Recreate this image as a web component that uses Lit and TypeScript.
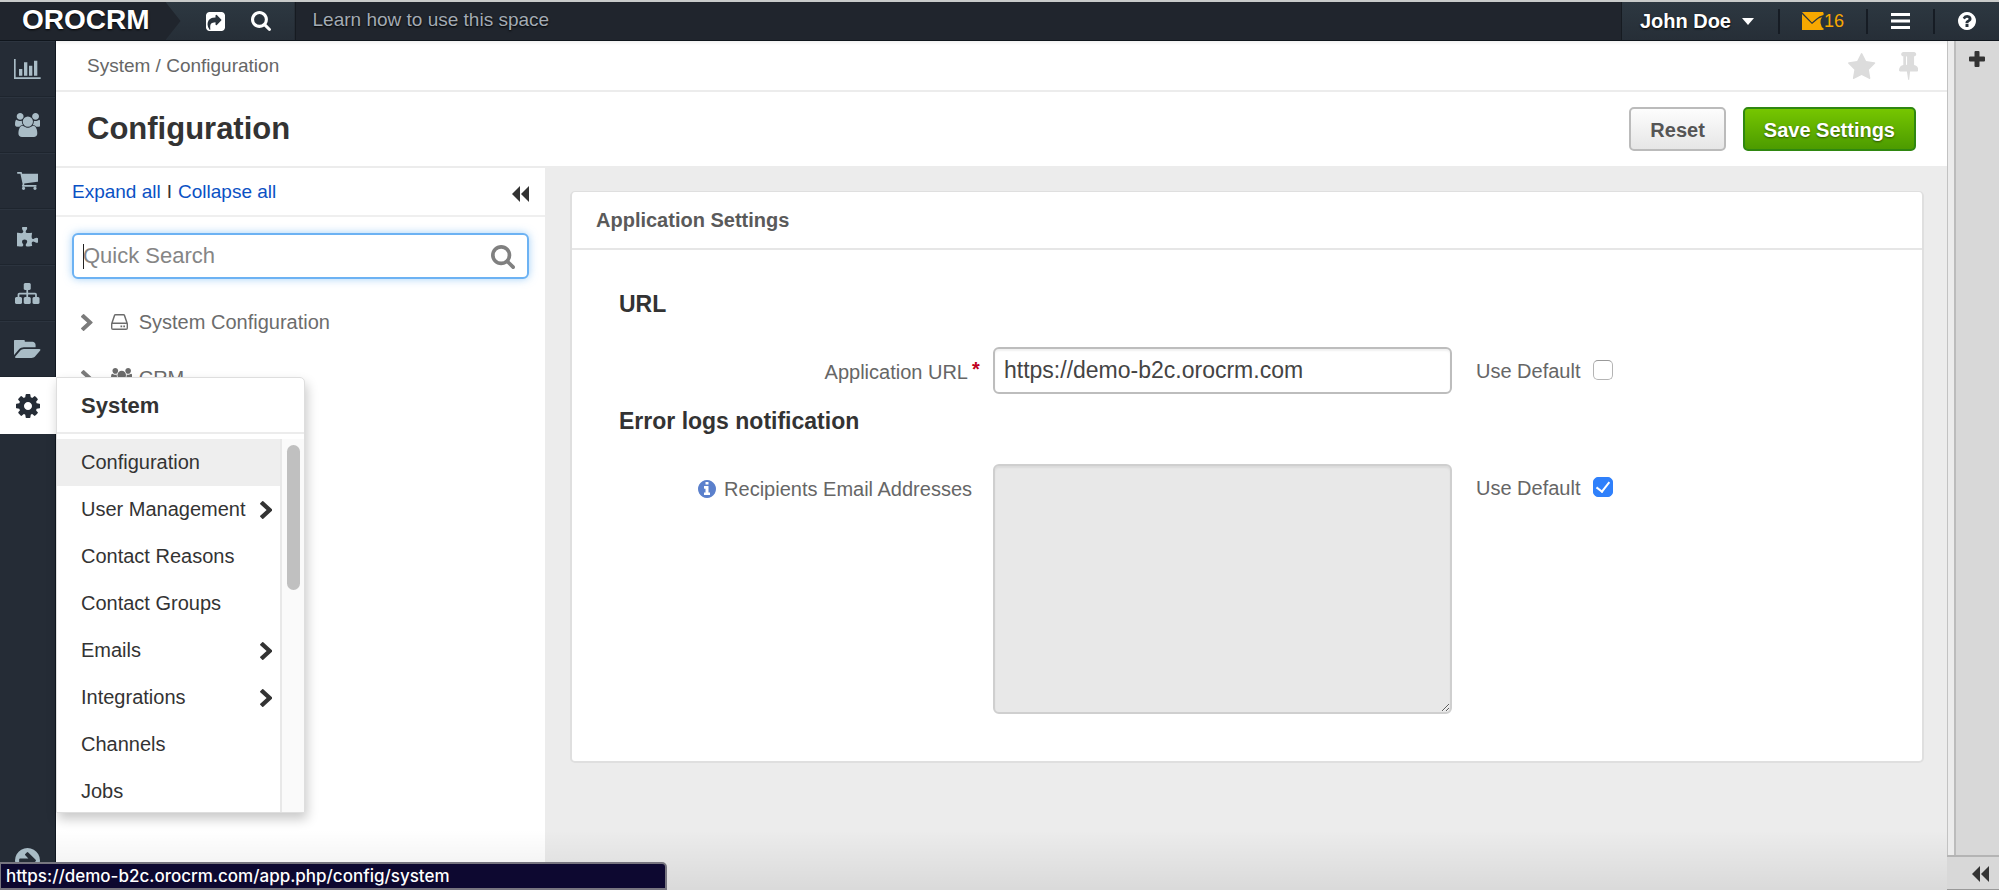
import { LitElement, html, css, svg, nothing } from "lit";
import { customElement, property } from "lit/decorators.js";

type Glyph = { box: string; paths: string[] };

const DISC =
  "M1664 896q0 209-103 385.5t-279.5 279.5-385.5 103-385.5-103-279.5-279.5-103-385.5 103-385.5 279.5-279.5 385.5-103 385.5 103 279.5 279.5 103 385.5z";

const GLYPHS: Record<string, Glyph> = {
  chart: {
    box: "0 128 2048 1536",
    paths: [
      "M640 896v512h-256v-512h256zm384-512v1024h-256v-1024h256zm1024 1152v128h-2048v-1536h128v1408h1920zm-640-896v768h-256v-768h256zm384-384v1152h-256v-1152h256z",
    ],
  },
  users: {
    box: "0 0 1920 1792",
    paths: [
      "M593 896q-162 5-265 128h-134q-82 0-138-40.5t-56-118.5q0-353 124-353 6 0 43.5 21t97.5 42.5 119 21.5q67 0 133-23-5 37-5 66 0 139 81 256zm1071 637q0 120-73 189.5t-194 69.5h-874q-121 0-194-69.5t-73-189.5q0-53 3.5-103.5t14-109 26.5-108.5 43-97.5 62-81 85.5-53.5 111.5-20q10 0 43 21.5t73 48 107 48 135 21.5 135-21.5 107-48 73-48 43-21.5q61 0 111.5 20t85.5 53.5 62 81 43 97.5 26.5 108.5 14 109 3.5 103.5zm-1024-1277q0 106-75 181t-181 75-181-75-75-181 75-181 181-75 181 75 75 181zm704 384q0 159-112.5 271.5t-271.5 112.5-271.5-112.5-112.5-271.5 112.5-271.5 271.5-112.5 271.5 112.5 112.5 271.5zm576 225q0 78-56 118.5t-138 40.5h-134q-103-123-265-128 81-117 81-256 0-29-5-66 66 23 133 23 59 0 119-21.5t97.5-42.5 43.5-21q124 0 124 353zm-128-609q0 106-75 181t-181 75-181-75-75-181 75-181 181-75 181 75 75 181z",
    ],
  },
  cart: {
    box: "64 256 1664 1408",
    paths: [
      "M704 1536q0 52-38 90t-90 38-90-38-38-90 38-90 90-38 90 38 38 90zm896 0q0 52-38 90t-90 38-90-38-38-90 38-90 90-38 90 38 38 90zm128-1088v512q0 24-16.5 42.5t-40.5 21.5l-1044 122q13 60 13 70 0 16-24 64h920q26 0 45 19t19 45-19 45-45 19h-1024q-26 0-45-19t-19-45q0-11 8-31.5t16-36 21.5-40 15.5-29.5l-177-823h-204q-26 0-45-19t-19-45 19-45 45-19h256q16 0 28.5 6.5t19.5 15.5 13 24.5 8 26 5.5 29.5 4.5 26h1201q26 0 45 19t19 45z",
    ],
  },
  puzzle: {
    box: "91 64 1664 1600",
    paths: [
      "M1755 1083q0 81-44.5 135t-123.5 54q-41 0-77.5-17.5t-59-38-56.5-38-71-17.5q-110 0-110 124 0 39 16 115t15 115v5q-22 0-33 1-34 3-97.5 11.5t-115.5 13.5-98 5q-61 0-103-26.5t-42-83.5q0-37 17.5-71t38-56.5 38-59 17.5-77.5q0-79-54-123.5t-135-44.5q-84 0-143 45.5t-59 127.5q0 43 15 83t33.5 64.5 33.5 53 15 50.5q0 45-46 89-37 35-117 35-95 0-245-24-9-2-27.5-4t-27.5-4l-13-2q-1 0-3-1-2 0-2-1v-1024q2 1 17.5 3.5t34 5 21.5 3.5q150 24 245 24 80 0 117-35 46-44 46-89 0-22-15-50.5t-33.5-53-33.5-64.5-15-83q0-82 59-127.5t144-45.5q80 0 134 44.5t54 123.5q0 41-17.5 77.5t-38 59-38 56.5-17.5 71q0 57 42 83.5t103 26.5q64 0 180-15t163-17v2q-1 2-3.5 17.5t-5 34-3.5 21.5q-24 150-24 245 0 80 35 117 44 46 89 46 22 0 50.5-15t53-33.5 64.5-33.5 83-15q82 0 127.5 59t45.5 143z",
    ],
  },
  sitemap: {
    box: "0 128 1792 1536",
    paths: [
      "M1792 1248v320q0 40-28 68t-68 28h-320q-40 0-68-28t-28-68v-320q0-40 28-68t68-28h96v-192h-512v192h96q40 0 68 28t28 68v320q0 40-28 68t-68 28h-320q-40 0-68-28t-28-68v-320q0-40 28-68t68-28h96v-192h-512v192h96q40 0 68 28t28 68v320q0 40-28 68t-68 28h-320q-40 0-68-28t-28-68v-320q0-40 28-68t68-28h96v-192q0-52 38-90t90-38h512v-192h-96q-40 0-68-28t-28-68v-320q0-40 28-68t68-28h320q40 0 68 28t28 68v320q0 40-28 68t-68 28h-96v192h512q52 0 90 38t38 90v192h96q40 0 68 28t28 68z",
    ],
  },
  folder: {
    box: "0 256 1879 1280",
    paths: [
      "M1879 952q0 31-31 66l-336 396q-43 51-120.5 86.5t-143.5 35.5h-1088q-34 0-60.5-13t-26.5-43q0-31 31-66l336-396q43-51 120.5-86.5t143.5-35.5h1088q34 0 60.5 13t26.5 43zm-343-344v160h-832q-94 0-197 47.5t-164 119.5l-337 396-5 6q0-4-.5-12.5t-.5-12.5v-960q0-92 66-158t158-66h320q92 0 158 66t66 158v32h544q92 0 158 66t66 158z",
    ],
  },
  cog: {
    box: "128 128 1536 1536",
    paths: [
      "M1152 896q0-106-75-181t-181-75-181 75-75 181 75 181 181 75 181-75 75-181zm512-109v222q0 12-8 23t-20 13l-185 28q-19 54-39 91 35 50 107 138 10 12 10 25t-9 23q-27 37-99 108t-94 71q-12 0-26-9l-138-108q-44 23-91 38-16 136-29 186-7 28-36 28h-222q-14 0-24.5-8.5t-11.5-21.5l-28-184q-49-16-90-37l-141 107q-10 9-25 9-14 0-25-11-126-114-165-168-7-10-7-23 0-12 8-23 15-21 51-66.5t54-70.5q-27-50-41-99l-183-27q-13-2-21-12.5t-8-23.5v-222q0-12 8-23t19-13l186-28q14-46 39-92-40-57-107-138-10-12-10-24 0-10 9-23 26-36 98.5-107.5t94.5-71.5q13 0 26 10l138 107q44-23 91-38 16-136 29-186 7-28 36-28h222q14 0 24.5 8.5t11.5 21.5l28 184q49 16 90 37l142-107q9-9 24-9 13 0 25 10 129 119 165 170 7 8 7 22 0 12-8 23-15 21-51 66.5t-54 70.5q26 50 41 98l183 28q13 2 21 12.5t8 23.5z",
    ],
  },
  search: {
    box: "64 128 1664 1664",
    paths: [
      "M1216 832q0-185-131.5-316.5t-316.5-131.5-316.5 131.5-131.5 316.5 131.5 316.5 316.5 131.5 316.5-131.5 131.5-316.5zm512 832q0 52-38 90t-90 38q-54 0-90-38l-343-342q-179 124-399 124-143 0-273.5-55.5t-225-150-150-225-55.5-273.5 55.5-273.5 150-225 225-150 273.5-55.5 273.5 55.5 225 150 150 225 55.5 273.5q0 220-124 399l343 343q37 37 37 90z",
    ],
  },
  share: {
    box: "128 128 1536 1536",
    paths: [
      "M1005 1171l352-352q19-19 19-45t-19-45l-352-352q-30-31-70-14-39 17-39 59v160q-119 0-216 19.5t-162.5 51-114 79-76.5 95.5-44.5 109-21.5 111.5-5 110.5q0 181 167 404 11 12 25 12 7 0 13-3 22-9 19-33-44-354 62-473 46-52 130-75.5t224-23.5v160q0 42 39 59 12 5 25 5 26 0 45-19zM416 128h960q119 0 203.500 84.500t84.500 203.500v960q0 119-84.500 203.500t-203.500 84.500h-960q-119 0-203.500-84.500t-84.500-203.500v-960q0-119 84.500-203.500t203.500-84.500z",
    ],
  },
  star: {
    box: "64 32 1664 1588",
    paths: [
      "M1728 647q0 22-26 48l-363 354 86 500q1 7 1 20 0 21-10.5 35.5t-30.5 14.5q-19 0-40-12l-449-236-449 236q-22 12-40 12-21 0-31.5-14.5t-10.5-35.5q0-6 2-20l86-500-364-354q-25-27-25-48 0-37 56-46l502-73 225-455q19-41 49-41t49 41l225 455 502 73q56 9 56 46z",
    ],
  },
  pin: {
    box: "320 128 1152 1664",
    paths: [
      "M800 864v-448q0-14-9-23t-23-9-23 9-9 23v448q0 14 9 23t23 9 23-9 9-23zm672 352q0 26-19 45t-45 19h-429l-51 483q-2 12-10.5 20.5t-20.500 8.500h-1q-27 0-32-27l-76-485h-404q-26 0-45-19t-19-45q0-123 78.5-221.5t177.5-98.5v-512q-52 0-90-38t-38-90 38-90 90-38h640q52 0 90 38t38 90-38 90-90 38v512q99 0 177.5 98.5t78.5 221.5z",
    ],
  },
  help: {
    box: "128 128 1536 1536",
    paths: [
      "M1024 1376v-192q0-14-9-23t-23-9h-192q-14 0-23 9t-9 23v192q0 14 9 23t23 9h192q14 0 23-9t9-23zm256-672q0-88-55.5-163t-138.500-116-170-41q-243 0-371 213-15 24 8 42l132 100q7 6 19 6 16 0 25-12 53-68 86-92 34-24 86-24 48 0 85.5 26t37.5 59q0 38-20 61t-68 45q-63 28-115.5 86.5t-52.5 125.5v36q0 14 9 23t23 9h192q14 0 23-9t9-23q0-19 21.5-49.5t54.5-49.5q32-18 49-28.5t46-35 44.5-48 28-60.5 12.5-81z" +
        DISC,
    ],
  },
  info: {
    box: "128 128 1536 1536",
    paths: [
      "M1152 1376v-160q0-14-9-23t-23-9h-96v-512q0-14-9-23t-23-9h-320q-14 0-23 9t-9 23v160q0 14 9 23t23 9h96v320h-96q-14 0-23 9t-9 23v160q0 14 9 23t23 9h448q14 0 23-9t9-23zm-128-896v-160q0-14-9-23t-23-9h-192q-14 0-23 9t-9 23v160q0 14 9 23t23 9h192q14 0 23-9t9-23z" +
        DISC,
    ],
  },
  arrowDisc: {
    box: "128 128 1536 1536",
    paths: [
      "M1413 896q0-27-18-45l-91-91-362-362q-18-18-45-18t-45 18l-91 91q-18 18-18 45t18 45l189 189h-502q-26 0-45 19t-19 45v128q0 26 19 45t45 19h502l-189 189q-19 19-19 45t19 45l91 91q18 18 45 18t45-18l362-362 91-91q18-18 18-45z" +
        DISC,
    ],
  },
  chevron: {
    box: "346 135 1036 1503",
    paths: [
      "M1363 932l-742 687q-19 19-45 19t-45-19l-166-166q-19-19-19-45t19-45l531-476-531-476q-19-19-19-45t19-45l166-166q19-19 45-19t45 19l742 687q19 19 19 45t-19 45z",
    ],
  },
  rewind: { box: "0 0 17 16", paths: ["M8 0V16L0 8ZM17 0V16L9 8Z"] },
  plus: {
    box: "0 0 16 16",
    paths: ["M6.500 0h3q1 0 1 1v4.500H15q1 0 1 1v3q0 1-1 1h-4.500V15q0 1-1 1h-3q-1 0-1-1v-4.500H1q-1 0-1-1v-3q0-1 1-1h4.500V1q0-1 1-1z"],
  },
  caret: { box: "0 0 12 7", paths: ["M0 0H12L6 7Z"] },
  bars: { box: "0 0 19 16", paths: ["M0 0h19v3H0ZM0 6.500h19v3H0ZM0 13h19v3H0Z"] },
  envelope: {
    box: "0 0 22 18",
    paths: ["M0 2L10 12L13 9.500Q16 6 20 5Q18 8 18.500 11Q19 15 22 17Q21.500 18 20 18H0Z", "M0 0H21Q22 1 21.500 3Q17 4 14 7L10 10.500Z"],
  },
  drive: {
    box: "0 0 17 16",
    paths: [
      "M4.500 0h8q1.300 0 1.700 1.200L16.800 9q.2.500.2 1v4q0 2-2 2h-13q-2 0-2-2v-4q0-.500.2-1L2.800 1.200Q3.200 0 4.500 0ZM4.300 1.400L1.900 8.500h13.200L12.700 1.400ZM1.400 10v4.500h14.200V10ZM9.500 11.500h1.700v1.700H9.500ZM12.300 11.500h1.700v1.700h-1.700Z",
    ],
  },
};

function icon(name: string, cls: string) {
  const g = GLYPHS[name];
  return html`<svg class="icon ${cls}" viewBox=${g.box} fill="currentColor" fill-rule="evenodd" aria-hidden="true">
    ${g.paths.map((d) => svg`<path d=${d}></path>`)}
  </svg>`;
}

const shared = css`
  * {
    box-sizing: border-box;
  }
  .icon {
    display: block;
    flex: none;
    height: 20px;
    width: auto;
  }
  button,
  input,
  textarea {
    font-family: inherit;
    margin: 0;
  }
  .bare {
    display: flex;
    align-items: center;
    justify-content: center;
    padding: 0;
    border: 0;
    background: none;
    color: inherit;
    font-size: 20px;
    cursor: pointer;
  }
  a {
    text-decoration: none;
    color: inherit;
  }
`;

@customElement("oro-header")
export class OroHeader extends LitElement {
  static styles = [
    shared,
    css`
      :host {
        display: flex;
        height: 41px;
        flex: none;
        border-top: 2px solid #c9cbca;
        border-bottom: 1px solid #0f151c;
        background: #20252d;
        color: #fff;
        text-shadow: 0 1px 2px #000;
      }
      .logo {
        padding: 0 16px 0 22px;
        font-size: 28px;
        line-height: 36px;
        font-weight: bold;
      }
      .tools {
        display: flex;
        align-items: center;
        gap: 26px;
        padding: 0 24px 0 40px;
        background: linear-gradient(#2d3841, #262e37);
        clip-path: polygon(0 0, 100% 0, 100% 100%, 0 100%, 15px 50%);
      }
      .share {
        height: 19px;
      }
      .find {
        height: 20px;
      }
      .hint {
        flex: 1;
        padding-left: 17px;
        border-left: 1px solid #161b21;
        font-size: 19px;
        line-height: 36px;
        color: #a3abb4;
      }
      .user {
        display: flex;
        align-items: center;
        background: linear-gradient(#2d3841, #262e37);
        border-left: 1px solid #161b21;
      }
      .cell {
        height: 25px;
        border-left: 2px solid #161c24;
      }
      .name {
        padding: 0 24px 0 18px;
        gap: 11px;
        font-weight: bold;
        text-shadow: 0 1px 2px #000;
      }
      .caret {
        height: 7px;
      }
      .mail {
        display: flex;
        align-items: center;
        width: 88px;
        padding-left: 22px;
        color: #f7a800;
        font-size: 18px;
        text-shadow: none;
      }
      .envelope {
        height: 18px;
      }
      .menu {
        width: 67px;
      }
      .bars {
        height: 16px;
      }
      .help {
        width: 66px;
      }
      .question {
        height: 18px;
      }
    `,
  ];

  render() {
    return html`
      <a class="logo" href="#">OROCRM</a>
      <div class="tools">
        <button class="bare" aria-label="Shortcuts">${icon("share", "share")}</button>
        <button class="bare" aria-label="Search">${icon("search", "find")}</button>
      </div>
      <a class="hint" href="#">Learn how to use this space</a>
      <div class="user">
        <button class="bare name">John Doe ${icon("caret", "caret")}</button>
        <a class="mail cell" href="#">${icon("envelope", "envelope")}16</a>
        <button class="bare menu cell" aria-label="Menu">${icon("bars", "bars")}</button>
        <button class="bare help cell" aria-label="Help">${icon("help", "question")}</button>
      </div>
    `;
  }
}

const NAV = [
  { label: "Dashboards", glyph: "chart" },
  { label: "Customers", glyph: "users" },
  { label: "Sales", glyph: "cart" },
  { label: "Activities", glyph: "puzzle" },
  { label: "Marketing", glyph: "sitemap" },
  { label: "Reports", glyph: "folder" },
];

const SYSTEM_MENU = [
  { label: "Configuration", active: true },
  { label: "User Management", more: true },
  { label: "Contact Reasons" },
  { label: "Contact Groups" },
  { label: "Emails", more: true },
  { label: "Integrations", more: true },
  { label: "Channels" },
  { label: "Jobs" },
] as { label: string; active?: boolean; more?: boolean }[];

@customElement("oro-sidebar")
export class OroSidebar extends LitElement {
  static styles = [
    shared,
    css`
      :host {
        display: flex;
        flex-direction: column;
        flex: none;
        width: 56px;
        background: #252c36;
        border-right: 1px solid #101720;
        color: #a9bcc6;
        z-index: 2;
      }
      .nav {
        display: flex;
        align-items: center;
        justify-content: center;
        height: 56px;
        border-bottom: 1px solid #1e252e;
        border-top: 1px solid #2c343f;
      }
      .current {
        position: relative;
        height: 57px;
      }
      .current .nav {
        height: 57px;
        width: 56px;
        background: #fff;
        border: 0;
        color: #252c36;
      }
      .cart {
        height: 18px;
      }
      .puzzle,
      .sitemap {
        height: 21px;
      }
      .folder {
        height: 18px;
      }
      .cog,
      .users {
        height: 24px;
      }
      .expand {
        margin-top: auto;
        padding-bottom: 17px;
      }
      .disc {
        height: 25px;
      }
      .popup {
        position: absolute;
        top: 0;
        left: 56px;
        width: 249px;
        background: #fff;
        color: #333;
        border: 1px solid #dedede;
        border-radius: 0 5px 0 0;
        box-shadow: 2px 6px 12px rgba(0, 0, 0, 0.22);
      }
      .title {
        margin: 0;
        padding: 2px 24px 0;
        font-size: 22px;
        line-height: 52px;
        border-bottom: 2px solid #ececec;
      }
      .scroller {
        display: flex;
        margin-top: 5px;
        height: 373px;
        overflow: hidden;
      }
      .list {
        flex: 1;
        margin: 0;
        padding: 0;
        list-style: none;
      }
      .entry {
        display: flex;
        align-items: center;
        justify-content: space-between;
        padding: 0 8px 0 24px;
        font-size: 20px;
        line-height: 47px;
      }
      .active {
        background: #eee;
      }
      .chevron {
        height: 18px;
      }
      .track {
        width: 24px;
        padding: 6px 4px 5px 5px;
        background: #fafafa;
        border-left: 2px solid #e8e8e8;
      }
      .thumb {
        width: 13px;
        height: 145px;
        border-radius: 7px;
        background: #c0c0c0;
      }
    `,
  ];

  render() {
    return html`
      ${NAV.map((n) => html`<a class="nav" href="#" aria-label=${n.label}>${icon(n.glyph, n.glyph)}</a>`)}
      <div class="current">
        <a class="nav" href="#" aria-label="System">${icon("cog", "cog")}</a>
        <div class="popup">
          <h2 class="title">System</h2>
          <div class="scroller">
            <ul class="list">
              ${SYSTEM_MENU.map(
                (m) => html`<li>
                  <a class="entry ${m.active ? "active" : ""}" href="#">${m.label}${m.more ? icon("chevron", "chevron") : nothing}</a>
                </li>`,
              )}
            </ul>
            <div class="track"><div class="thumb"></div></div>
          </div>
        </div>
      </div>
      <button class="bare expand" aria-label="Expand menu">${icon("arrowDisc", "disc")}</button>
    `;
  }
}

@customElement("oro-tree")
export class OroTree extends LitElement {
  static styles = [
    shared,
    css`
      :host {
        flex: none;
        width: 489px;
        background: #fff;
      }
      .actions {
        display: flex;
        align-items: center;
        height: 49px;
        padding: 0 16px;
        border-bottom: 2px solid #efefef;
        font-size: 19px;
      }
      .link {
        color: #0a51c4;
      }
      .bar {
        padding: 0 6px;
      }
      .collapse {
        margin-left: auto;
        padding-top: 5px;
      }
      .rewind {
        height: 16px;
      }
      .search {
        position: relative;
        margin: 16px 16px 0;
      }
      .box {
        display: block;
        width: 100%;
        height: 46px;
        padding: 0 50px 0 9px;
        border: 2px solid #6cb2f3;
        border-radius: 6px;
        box-shadow: 0 0 8px rgba(90, 170, 240, 0.55);
        font-size: 22px;
        color: #444;
        outline: none;
      }
      .box::placeholder {
        color: #858585;
      }
      .cursor {
        position: absolute;
        left: 11px;
        top: 11px;
        width: 1px;
        height: 25px;
        background: #222;
      }
      .submit {
        position: absolute;
        right: 14px;
        top: 12px;
        color: #808080;
      }
      .find {
        height: 24px;
      }
      .nodes {
        margin: 0;
        padding: 15px 0 0 25px;
        list-style: none;
        color: #6c6c6c;
      }
      .node {
        display: flex;
        align-items: center;
        font-size: 20px;
        line-height: 56px;
      }
      .chevron {
        height: 17px;
        color: #7b7b7b;
      }
      .kind {
        display: flex;
        width: 46px;
        padding-left: 18px;
      }
      .drive {
        height: 16px;
      }
      .users {
        height: 20px;
      }
    `,
  ];

  render() {
    return html`
      <div class="actions">
        <a class="link" href="#">Expand all</a><span class="bar">I</span><a class="link" href="#">Collapse all</a>
        <button class="bare collapse" aria-label="Collapse panel">${icon("rewind", "rewind")}</button>
      </div>
      <div class="search">
        <input class="box" type="text" placeholder="Quick Search" aria-label="Quick Search" />
        <span class="cursor"></span>
        <button class="bare submit" aria-label="Search">${icon("search", "find")}</button>
      </div>
      <ul class="nodes">
        <li class="node">
          ${icon("chevron", "chevron")}<span class="kind">${icon("drive", "drive")}</span><a href="#">System Configuration</a>
        </li>
        <li class="node">
          ${icon("chevron", "chevron")}<span class="kind">${icon("users", "users")}</span><a href="#">CRM</a>
        </li>
      </ul>
    `;
  }
}

@customElement("oro-settings")
export class OroSettings extends LitElement {
  static styles = [
    shared,
    css`
      :host {
        flex: 1;
        min-width: 0;
        padding: 23px 23px 24px 25px;
        background: #ececec;
      }
      .card {
        background: #fff;
        border: 2px solid #dfdfdf;
        border-top-width: 1px;
        border-radius: 5px;
      }
      .head {
        margin: 0;
        padding: 0 24px;
        font-size: 20px;
        line-height: 56px;
        color: #5a5a5a;
        border-bottom: 2px solid #e6e6e6;
      }
      .body {
        display: grid;
        grid-template-columns: minmax(0, 410px) minmax(0, 459px) auto;
        column-gap: 11px;
        align-items: start;
        padding: 40px 0 47px;
      }
      .section {
        grid-column: 1 / -1;
        margin: 0 0 29px;
        padding-left: 47px;
        font-size: 23px;
        line-height: 28px;
        color: #333;
      }
      .label {
        display: flex;
        justify-content: flex-end;
        align-items: center;
        gap: 8px;
        padding: 12px 10px 0 0;
        font-size: 20px;
        line-height: 26px;
        color: #666;
      }
      .required {
        gap: 4px;
        padding-right: 0;
      }
      .info {
        height: 18px;
        color: #5b80cc;
      }
      .mark {
        width: 10px;
        line-height: 20px;
        align-self: flex-start;
        font-weight: bold;
        color: #c00020;
      }
      .text {
        width: 100%;
        height: 47px;
        margin-bottom: 13px;
        padding: 0 9px;
        border: 2px solid #bdbdbd;
        border-radius: 6px;
        font-size: 23px;
        color: #444;
        box-shadow: inset 0 2px 2px rgba(0, 0, 0, 0.06);
      }
      .area {
        display: block;
        width: 100%;
        height: 250px;
        border: 2px solid #cfcfcf;
        border-radius: 6px;
        background: #e8e8e8;
        resize: both;
        box-shadow: inset 0 2px 2px rgba(0, 0, 0, 0.06);
      }
      .default {
        display: flex;
        align-items: center;
        gap: 12px;
        padding: 10px 0 0 13px;
        font-size: 20px;
        line-height: 28px;
        color: #666;
      }
      .check {
        appearance: none;
        display: grid;
        place-items: center;
        width: 20px;
        height: 20px;
        margin-bottom: 3px;
        border: 1px solid #b4b4b4;
        border-top-color: #999;
        border-radius: 5px;
        background: #fff;
      }
      .check:checked {
        background: #2f80fb;
        border-color: #2f80fb;
      }
      .check:checked::after {
        content: "";
        width: 6px;
        height: 11px;
        margin-bottom: 3px;
        border: solid #fff;
        border-width: 0 2px 2px 0;
        transform: rotate(38deg);
      }
    `,
  ];

  render() {
    return html`
      <section class="card">
        <h2 class="head">Application Settings</h2>
        <div class="body">
          <h3 class="section">URL</h3>
          <label class="label required" for="url">Application URL<span class="mark">*</span></label>
          <input class="text" id="url" type="text" value="https://demo-b2c.orocrm.com" />
          <label class="default">Use Default <input class="check" type="checkbox" /></label>
          <h3 class="section">Error logs notification</h3>
          <label class="label" for="emails">${icon("info", "info")}Recipients Email Addresses</label>
          <textarea class="area" id="emails"></textarea>
          <label class="default">Use Default <input class="check" type="checkbox" checked /></label>
        </div>
      </section>
    `;
  }
}

@customElement("app-root")
export class AppRoot extends LitElement {
  @property() status = "https://demo-b2c.orocrm.com/app.php/config/system";

  static styles = [
    shared,
    css`
      :host {
        display: flex;
        flex-direction: column;
        position: relative;
        height: 100vh;
        overflow: hidden;
        font-family: "Liberation Sans", Arial, sans-serif;
        color: #333;
        background: #fff;
      }
      .shell {
        display: flex;
        flex: 1;
        min-height: 0;
      }
      .page {
        display: flex;
        flex-direction: column;
        flex: 1;
        min-width: 0;
        position: relative;
      }
      .crumbs {
        display: flex;
        align-items: center;
        height: 51px;
        padding: 0 29px 0 31px;
        border-bottom: 2px solid #ececec;
        box-shadow: inset 0 4px 3px -2px rgba(0, 0, 0, 0.06);
        font-size: 19px;
        color: #666;
      }
      .path {
        flex: 1;
      }
      .marks {
        display: flex;
        gap: 23px;
        color: #dcdcdc;
      }
      .star {
        height: 26px;
      }
      .pin {
        height: 28px;
      }
      .heading {
        display: flex;
        align-items: center;
        gap: 17px;
        height: 76px;
        padding: 0 31px;
        border-bottom: 2px solid #ececec;
      }
      .title {
        flex: 1;
        margin: 0;
        font-size: 31px;
        line-height: 40px;
      }
      .button {
        height: 44px;
        padding: 2px 19px 0;
        border: 2px solid #bbb;
        border-radius: 5px;
        background: linear-gradient(#fdfdfd, #e6e6e6);
        font-size: 20px;
        font-weight: bold;
        color: #555;
      }
      .save {
        background: linear-gradient(#76c600, #4c9b00);
        border-color: #2f8710;
        color: #fff;
        text-shadow: 0 1px 2px rgba(0, 0, 0, 0.5);
      }
      .split {
        display: flex;
        flex: 1;
        min-height: 0;
      }
      .fade {
        position: absolute;
        inset: auto 0 0 0;
        height: 60px;
        background: linear-gradient(rgba(0, 0, 0, 0), rgba(0, 0, 0, 0.08));
        pointer-events: none;
      }
      .rail {
        display: flex;
        flex-direction: column;
        width: 52px;
        background: #d8d8d8;
      }
      .widgets {
        display: flex;
        flex: 1;
        align-items: flex-start;
        justify-content: center;
        padding: 10px 1px 0 0;
        border-left: 2px solid #bcbcbc;
        margin-left: 7px;
      }
      .gutter {
        flex: 1;
        display: flex;
        background: linear-gradient(90deg, #c2c2c2 1px, #ececec 1px 7px, transparent 7px);
      }
      .plus {
        height: 16px;
      }
      .toggle {
        display: flex;
        justify-content: flex-end;
        padding: 9px 10px 7px;
        border-top: 2px solid #b4b4b4;
        border-bottom: 1px solid #999;
      }
      .rewind {
        height: 16px;
      }
      .status {
        position: absolute;
        left: 0;
        bottom: 0;
        width: 667px;
        height: 28px;
        padding: 0 5px;
        border: 2px solid #77757f;
        border-left-width: 1px;
        border-radius: 0 5px 0 0;
        background: #0d0830;
        color: #fff;
        font-family: Inter, sans-serif;
        font-size: 17px;
        font-weight: 500;
        line-height: 24px;
        z-index: 3;
      }
    `,
  ];

  render() {
    return html`
      <oro-header></oro-header>
      <div class="shell">
        <oro-sidebar></oro-sidebar>
        <main class="page">
          <div class="crumbs">
            <span class="path">System / Configuration</span>
            <div class="marks">
              <button class="bare" aria-label="Favorite">${icon("star", "star")}</button>
              <button class="bare" aria-label="Pin">${icon("pin", "pin")}</button>
            </div>
          </div>
          <div class="heading">
            <h1 class="title">Configuration</h1>
            <button class="button">Reset</button>
            <button class="button save">Save Settings</button>
          </div>
          <div class="split">
            <oro-tree></oro-tree>
            <oro-settings></oro-settings>
          </div>
          <div class="fade"></div>
        </main>
        <aside class="rail">
          <div class="gutter">
            <div class="widgets"><button class="bare" aria-label="Add widget">${icon("plus", "plus")}</button></div>
          </div>
          <div class="toggle"><button class="bare" aria-label="Expand rail">${icon("rewind", "rewind")}</button></div>
        </aside>
      </div>
      <div class="status">${this.status}</div>
    `;
  }
}
